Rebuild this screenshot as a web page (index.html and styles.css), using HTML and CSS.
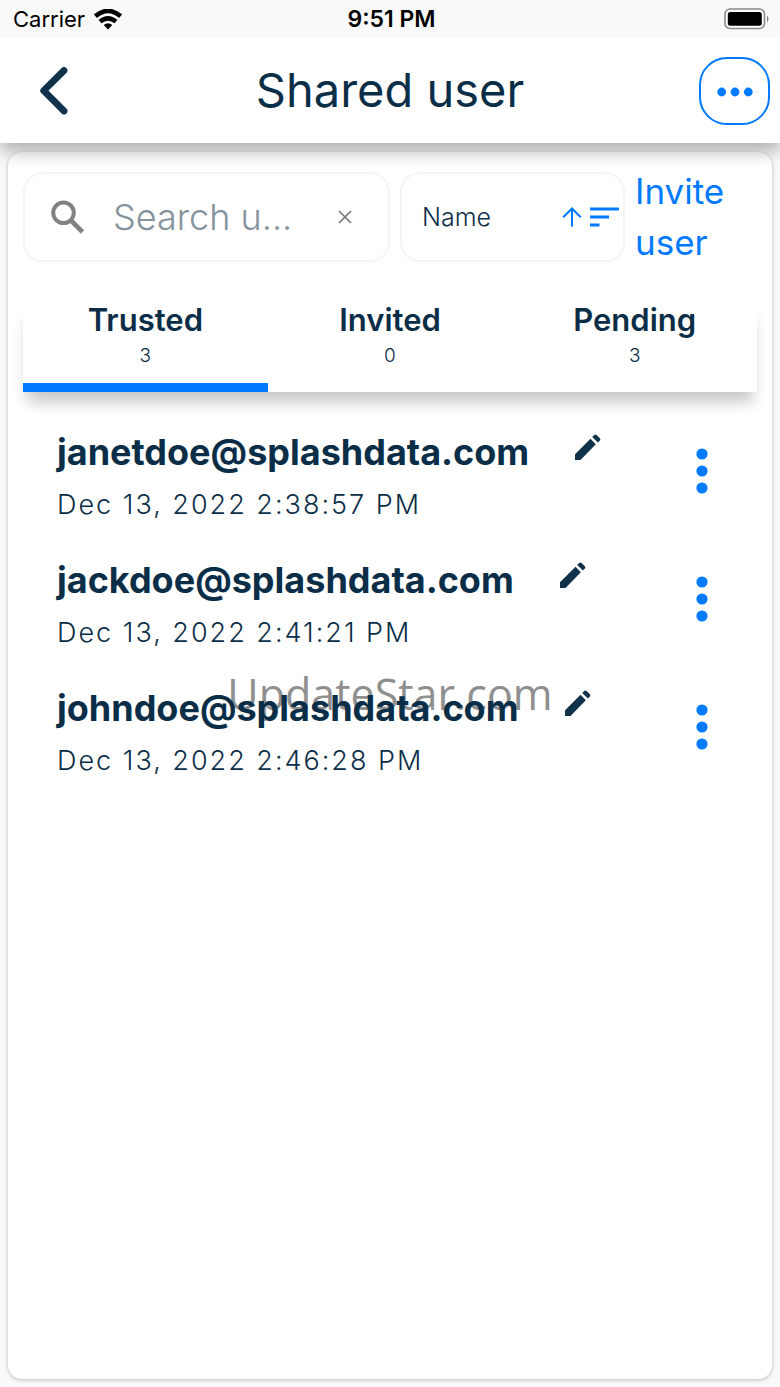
FILE: index.html
```html
<!DOCTYPE html>
<html lang="en">
<head>
<meta charset="utf-8">
<meta name="viewport" content="width=device-width, initial-scale=1">
<title>Shared user</title>
<link rel="stylesheet" href="styles.css">
</head>
<body>
<div class="screen">
  <div class="status">
    <div class="status-left">
      <span>Carrier</span>
      <svg width="28" height="21" viewBox="0 0 28 21" aria-hidden="true"><path fill="none" stroke="#000" stroke-width="4.6" d="M1.4 7.2Q14-3.4 26.600 7.200M6 12.600Q14 6 22 12.600"/><path d="M14 20.500l-4.300-4.600q4.300-3.400 8.600 0z"/></svg>
    </div>
    <span class="clock">9:51 PM</span>
    <div class="status-right">
      <svg width="46" height="22" viewBox="0 0 46 22" aria-hidden="true"><rect x="1" y="1" width="39.500" height="19.500" rx="5" fill="#fff" stroke="#8a8a8a" stroke-width="1.600"/><rect x="3.800" y="4" width="34" height="13.700" rx="2.500"/><path d="M43 7.500q3 3.500 0 7z" fill="#777"/></svg>
    </div>
  </div>
  <header class="header">
    <button class="back" aria-label="Back"><svg width="28" height="48" viewBox="0 0 28 48" aria-hidden="true"><path d="M24 3.500L3.700 23.700 24 44" fill="none" stroke="#10324a" stroke-width="6.800" stroke-linecap="round" stroke-linejoin="round"/></svg></button>
    <h1 class="title">Shared user</h1>
    <button class="more" aria-label="More options"><svg width="36" height="10" viewBox="0 0 36 10" aria-hidden="true"><circle cx="4.700" cy="5" r="4.400"/><circle cx="18" cy="5" r="4.400"/><circle cx="31.300" cy="5" r="4.400"/></svg></button>
  </header>
  <main class="card">
    <div class="toolbar">
      <div class="field search">
        <svg class="lens" width="34" height="34" viewBox="0 0 34 34" aria-hidden="true"><circle cx="12.500" cy="12.800" r="10.300" fill="none" stroke="#828282" stroke-width="4"/><path d="M20 20.500L31.500 32" stroke="#828282" stroke-width="4.600"/></svg>
        <input class="query" type="text" placeholder="Search u..." aria-label="Search users">
        <button class="clear" aria-label="Clear search"><svg width="14" height="14" viewBox="0 0 14 14" aria-hidden="true"><path d="M1 1l12 12M13 1L1 13" stroke="#777" stroke-width="1.700"/></svg></button>
      </div>
      <div class="field sort">
        <select class="sort-by" aria-label="Sort by"><option>Name</option></select>
        <button class="order" aria-label="Sort order"><svg width="57" height="22" viewBox="0 0 57 22" aria-hidden="true"><path d="M10 20.500V2.500M1.200 11.300L10 2.500l8.800 8.800" fill="none" stroke="#007aff" stroke-width="2"/><path d="M28 3h29M28 11h19M28 19h9.500" stroke="#007aff" stroke-width="3"/></svg></button>
      </div>
      <a class="invite" href="#">Invite user</a>
    </div>
    <div class="tabs" role="tablist">
      <button class="tab active" role="tab" aria-selected="true"><span class="tab-name">Trusted</span><span class="count">3</span></button>
      <button class="tab" role="tab" aria-selected="false"><span class="tab-name">Invited</span><span class="count">0</span></button>
      <button class="tab" role="tab" aria-selected="false"><span class="tab-name">Pending</span><span class="count">3</span></button>
    </div>
    <ul class="users">
      <li class="user">
        <div class="info">
          <div class="name-line"><span class="email">janetdoe@splashdata.com</span><button class="edit" aria-label="Edit janetdoe"><svg width="27" height="27" viewBox="0 0 27 27" aria-hidden="true"><path d="M1 26v-5.800L16.500 4.700l5.300 5.600L6.500 26zM18.200 3l2-2q1.200-1 2.400 0l3.300 3.300q1.100 1.200 0 2.300l-2 2z"/></svg></button></div>
          <div class="date">Dec 13, 2022 2:38:57 PM</div>
        </div>
        <button class="menu" aria-label="Actions for janetdoe"><svg width="12" height="46" viewBox="0 0 12 46" aria-hidden="true"><circle cx="6" cy="6" r="5.600"/><circle cx="6" cy="23" r="5.600"/><circle cx="6" cy="40" r="5.600"/></svg></button>
      </li>
      <li class="user">
        <div class="info">
          <div class="name-line"><span class="email">jackdoe@splashdata.com</span><button class="edit" aria-label="Edit jackdoe"><svg width="27" height="27" viewBox="0 0 27 27" aria-hidden="true"><path d="M1 26v-5.800L16.500 4.700l5.300 5.600L6.500 26zM18.200 3l2-2q1.200-1 2.400 0l3.300 3.300q1.100 1.200 0 2.300l-2 2z"/></svg></button></div>
          <div class="date">Dec 13, 2022 2:41:21 PM</div>
        </div>
        <button class="menu" aria-label="Actions for jackdoe"><svg width="12" height="46" viewBox="0 0 12 46" aria-hidden="true"><circle cx="6" cy="6" r="5.600"/><circle cx="6" cy="23" r="5.600"/><circle cx="6" cy="40" r="5.600"/></svg></button>
      </li>
      <li class="user">
        <div class="info">
          <div class="name-line"><span class="email">johndoe@splashdata.com</span><button class="edit" aria-label="Edit johndoe"><svg width="27" height="27" viewBox="0 0 27 27" aria-hidden="true"><path d="M1 26v-5.800L16.500 4.700l5.300 5.600L6.500 26zM18.200 3l2-2q1.200-1 2.400 0l3.300 3.300q1.100 1.200 0 2.300l-2 2z"/></svg></button></div>
          <div class="date">Dec 13, 2022 2:46:28 PM</div>
        </div>
        <button class="menu" aria-label="Actions for johndoe"><svg width="12" height="46" viewBox="0 0 12 46" aria-hidden="true"><circle cx="6" cy="6" r="5.600"/><circle cx="6" cy="23" r="5.600"/><circle cx="6" cy="40" r="5.600"/></svg></button>
      </li>
    </ul>
  </main>
  <div class="watermark">UpdateStar.com</div>
</div>
</body>
</html>
```
FILE: styles.css
```css
* { box-sizing: border-box; }
body { margin: 0; background: #f9f9f9; color: #0b2e48; font-family: Inter, "Liberation Sans", sans-serif; }
button { padding: 0; border: 0; background: none; color: inherit; font: inherit; cursor: pointer; }
svg { display: block; }
.screen { position: relative; min-height: 100vh; display: flex; flex-direction: column; }

.status { position: relative; z-index: 3; display: grid; grid-template-columns: 1fr auto 1fr; align-items: center; height: 38px; padding: 0 10px 0 13px; background: #f9f9f9; color: #000; font-size: 22px; }
.status-left { display: flex; align-items: center; gap: 9px; }
.status-right { display: flex; justify-content: flex-end; }
.clock { font-size: 23px; font-weight: 600; }

.header { position: relative; z-index: 2; display: grid; grid-template-columns: 1fr auto 1fr; align-items: center; height: 105px; padding: 0 10px 0 40px; background: #fff; box-shadow: 0 8px 16px rgba(0, 0, 0, .3); }
.back { justify-self: start; }
.title { margin: 0 30px 2px 0; font-size: 47px; font-weight: 400; line-height: 56px; }
.more { justify-self: end; display: grid; place-items: center; width: 71px; height: 68px; padding-top: 2px; border: 2px solid #007aff; border-radius: 28px; fill: #007aff; }

.card { flex: 1; margin: 9px 8px 8px; padding: 20px 15px; background: #fff; border-radius: 14px; box-shadow: 0 1px 4px rgba(0, 0, 0, .25); }
.toolbar { display: flex; align-items: flex-start; gap: 10px; }
.field { display: flex; align-items: center; height: 90px; border: 2px solid #f5f5f5; border-radius: 20px; }
.search { flex: 1; min-width: 0; padding: 0 36px 0 26px; }
.lens { flex: none; margin-right: 28px; }
.query { flex: 1; min-width: 0; padding: 0; border: 0; outline: 0; background: none; color: inherit; font: 300 36px Inter, sans-serif; }
.query::placeholder { color: #84929c; opacity: 1; }
.sort { width: 225px; padding: 0 4px 0 20px; }
.sort-by { appearance: none; padding: 0; border: 0; background: none; color: inherit; font: 300 25px Inter, sans-serif; }
.order { margin-left: auto; }
.invite { width: 122px; margin-top: -6px; color: #007aff; font-size: 35px; line-height: 51px; text-decoration: none; }

.tabs { display: grid; grid-template-columns: repeat(3, 1fr); margin-top: 34px; background: #fff; box-shadow: 0 14px 14px -4px rgba(0, 0, 0, .22); }
.tab { display: flex; flex-direction: column; align-items: center; height: 90px; border-bottom: 9px solid transparent; }
.active { border-color: #007aff; }
.tab-name { font-size: 31px; font-weight: 600; line-height: 36px; }
.count { margin-top: 6px; font-size: 19px; font-weight: 300; line-height: 24px; }

.users { margin: 36px 0 0; padding: 0; list-style: none; }
.user { position: relative; z-index: 1; display: flex; justify-content: space-between; height: 128px; padding: 0 49px 0 34px; }
.name-line { display: flex; align-items: flex-start; gap: 45px; }
.email { font-size: 36px; font-weight: 700; line-height: 48px; }
.edit { margin-top: 6px; fill: #10324a; }
.date { margin-top: 12px; font-size: 27px; font-weight: 300; line-height: 34px; letter-spacing: 2px; }
.menu { align-self: flex-start; margin-top: 20px; fill: #007aff; }

.watermark { position: absolute; top: 50%; left: 0; right: 0; color: #8f8f8f; font-family: "Open Sans", sans-serif; font-size: 43px; line-height: 60px; text-align: center; transform: translateY(-50%); pointer-events: none; }
```
